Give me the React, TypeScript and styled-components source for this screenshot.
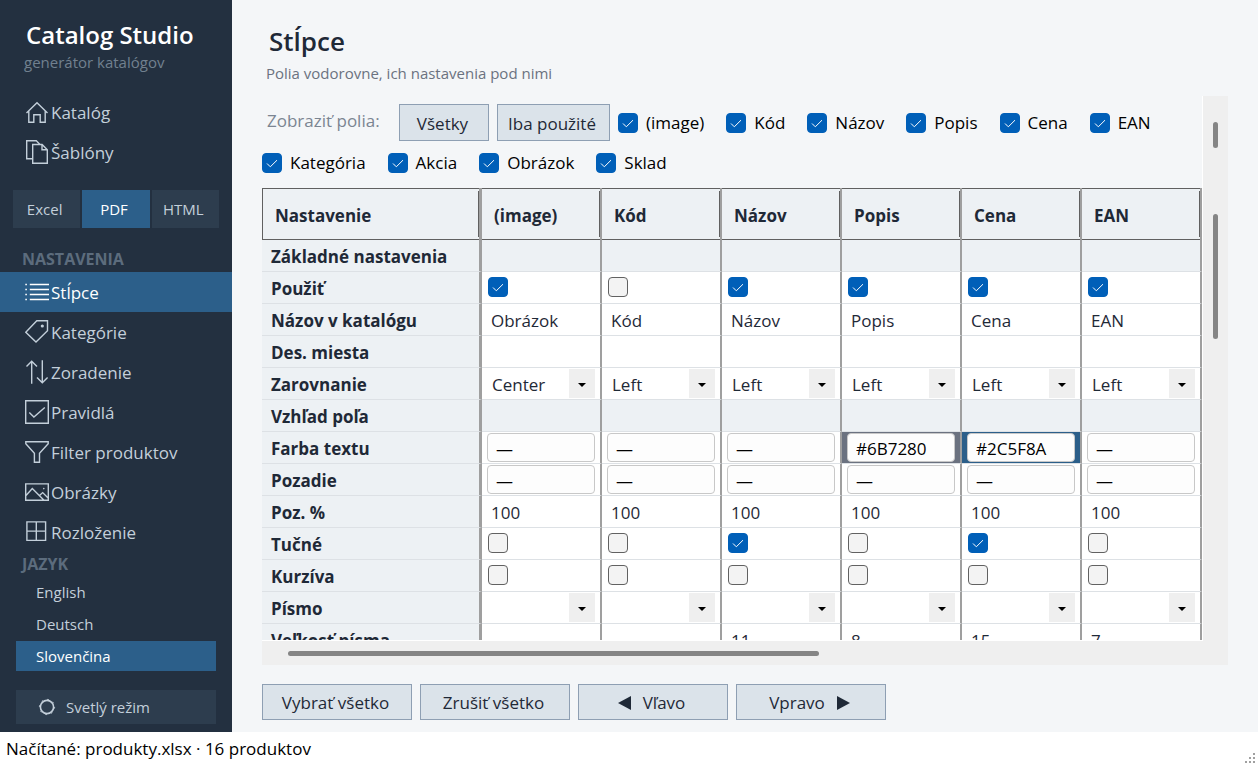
import React, { useState } from 'react';
import styled, { createGlobalStyle } from 'styled-components';

const GlobalStyle = createGlobalStyle`
  *, *::before, *::after { box-sizing: border-box; }
  html, body, #root { height: 100%; }
  body {
    margin: 0;
    background: #ffffff;
    color: #1f2937;
    font-family: 'Open Sans', 'Noto Sans', 'Liberation Sans', sans-serif;
    font-size: 17px;
    line-height: 24px;
  }
  button, input, select { font: inherit; color: inherit; margin: 0; }
  h1, h2, p { margin: 0; }
`;

const Window = styled.div`
  display: flex;
  flex-direction: column;
  height: 100vh;
  min-height: 764px;
`;

const Body = styled.div`
  display: flex;
  flex: 1;
  min-height: 0;
`;

const StatusBar = styled.footer`
  display: flex;
  align-items: center;
  justify-content: space-between;
  height: 32px;
  padding: 2px 0 0 6px;
  background: #ffffff;
  color: #000000;
`;

const Grip = styled.svg`
  align-self: flex-end;
  display: block;
`;

/* Sidebar */

const Sidebar = styled.aside`
  display: flex;
  flex-direction: column;
  flex: 0 0 232px;
  background: #233040;
  color: #c3cfda;
`;

const Brand = styled.div`
  padding: 20px 24px 0;
  height: 92px;
`;

const BrandName = styled.p`
  padding-left: 2px;
  font-size: 24px;
  line-height: 30px;
  font-weight: 600;
  color: #ffffff;
`;

const BrandNote = styled.p`
  font-size: 15px;
  line-height: 24px;
  color: #71808f;
`;

const NavLink = styled.a<{ $active?: boolean }>`
  display: flex;
  align-items: center;
  gap: 2px;
  height: 40px;
  padding-left: 25px;
  text-decoration: none;
  color: ${(p) => (p.$active ? '#ffffff' : '#c3cfda')};
  background: ${(p) => (p.$active ? '#2c5f8a' : 'transparent')};
`;

const NavText = styled.span`
  padding-top: 2px;
`;

const NavIcon = styled.svg`
  flex: none;
  width: 24px;
  height: 24px;
  fill: none;
  stroke: currentColor;
  stroke-width: 1.4;
`;

const Segments = styled.div`
  display: flex;
  gap: 2px;
  margin: 18px 13px 0;
`;

const Segment = styled.button<{ $active?: boolean }>`
  flex: 1;
  height: 38px;
  padding: 0 4px 0 0;
  border: 0;
  font-size: 15px;
  color: ${(p) => (p.$active ? '#ffffff' : '#c3cfda')};
  background: ${(p) => (p.$active ? '#2c5f8a' : '#2d3d4e')};
`;

const GroupTitle = styled.h2<{ $gap: number }>`
  padding: ${(p) => p.$gap}px 0 2px 22px;
  font-size: 16px;
  line-height: 22px;
  font-weight: 700;
  color: #5c6c7d;
`;

const Languages = styled.div`
  display: flex;
  flex-direction: column;
  gap: 2px;
  padding: 0 16px;
`;

const Language = styled.button<{ $active?: boolean }>`
  height: 30px;
  padding: 0 20px;
  border: 0;
  text-align: left;
  font-size: 15px;
  color: ${(p) => (p.$active ? '#ffffff' : '#c3cfda')};
  background: ${(p) => (p.$active ? '#2c5f8a' : 'transparent')};
`;

const ThemeButton = styled.button`
  display: flex;
  align-items: center;
  gap: 10px;
  height: 34px;
  margin: auto 16px 8px;
  padding: 0 22px;
  border: 0;
  font-size: 15px;
  color: #c3cfda;
  background: #2d3d4e;
`;

/* Main area */

const Main = styled.main`
  display: flex;
  flex-direction: column;
  flex: 1;
  min-width: 0;
  padding: 23px 30px 12px;
  background: #f4f6f8;
`;

const Title = styled.h1`
  padding-left: 7px;
  font-size: 26px;
  line-height: 36px;
  font-weight: 600;
`;

const Subtitle = styled.p`
  height: 37px;
  padding: 2px 4px 0;
  font-size: 15px;
  line-height: 24px;
  color: #6b7280;
`;

const Pane = styled.section<{ $grow?: boolean }>`
  display: flex;
  flex: ${(p) => (p.$grow ? '1 1 0' : '0 0 92px')};
  min-height: 0;
`;

const VerticalBar = styled.div<{ $top: number; $thumb: number }>`
  flex: 0 0 25px;
  padding: ${(p) => p.$top}px 0 0 10px;
  background: #efefef;

  &::before {
    content: '';
    display: block;
    width: 5px;
    height: ${(p) => p.$thumb}px;
    border-radius: 3px;
    background: #858585;
  }
`;

const HorizontalBar = styled.div`
  height: 25px;
  padding: 10px 0 0 26px;
  border-top: 1px solid #ffffff;
  background: #efefef;

  &::before {
    content: '';
    display: block;
    width: 58%;
    height: 5px;
    border-radius: 3px;
    background: #858585;
  }
`;

const Filters = styled.div`
  display: flex;
  flex: 1;
  flex-wrap: wrap;
  align-content: flex-start;
  align-items: center;
  gap: 12px 8px;
  min-width: 0;
  padding-top: 8px;
  border-right: 1px solid #ffffff;
`;

const FiltersLabel = styled.span`
  width: 129px;
  padding: 0 0 3px 5px;
  color: #7b8592;
`;

const Button = styled.button<{ $width: number; $height: number }>`
  display: flex;
  align-items: center;
  justify-content: center;
  gap: 12px;
  width: ${(p) => p.$width}px;
  height: ${(p) => p.$height}px;
  padding: 2px 3px 0 0;
  border: 1px solid #8e9fb3;
  background: #dbe3ea;
  color: #1f2937;
  white-space: nowrap;
`;

const FieldToggle = styled.label`
  display: flex;
  align-items: center;
  gap: 8px;
  height: 20px;
  padding-right: 14px;
  color: #000000;
`;

const CheckFrame = styled.span`
  display: inline-grid;
  vertical-align: top;

  & > * { grid-area: 1 / 1; }
`;

const CheckInput = styled.input`
  appearance: none;
  width: 20px;
  height: 20px;
  border: 1px solid #616161;
  border-radius: 4px;
  background: #f3f3f3;

  &:checked {
    border-color: #005fb8;
    background: #005fb8;
  }
`;

const CheckMark = styled.svg`
  width: 20px;
  height: 20px;
  fill: none;
  stroke: #ffffff;
  stroke-width: 1;
  pointer-events: none;
  visibility: hidden;

  ${CheckInput}:checked + & { visibility: visible; }
`;

const TableArea = styled.div`
  display: flex;
  flex-direction: column;
  flex: 1;
  min-width: 0;
`;

const TableView = styled.div`
  flex: 1 1 0;
  min-height: 0;
  overflow: hidden;
  border-right: 1px solid #ffffff;
`;

const Table = styled.table`
  width: 100%;
  table-layout: fixed;
  border-collapse: separate;
  border-spacing: 0;
`;

const HeadCell = styled.th<{ $first?: boolean }>`
  width: ${(p) => (p.$first ? '220px' : 'auto')};
  height: 52px;
  padding: 3px 0;
  text-align: left;
  font-weight: 700;
  background: #edf1f4;
  border: 0 solid #9f9f9f;
  border-right-width: ${(p) => (p.$first ? 3 : 2)}px;
  box-shadow: inset 0 1px #606060, inset 0 -1px #606060${(p) => (p.$first ? ', inset 1px 0 #606060' : '')};
`;

const HeadText = styled.span<{ $first?: boolean }>`
  display: block;
  padding: 13px 0 9px ${(p) => (p.$first ? 13 : 12)}px;
  border-right: 1px solid #606060;
`;

const RowHead = styled.th`
  height: 32px;
  padding: 2px 0 0 9px;
  text-align: left;
  font-weight: 700;
  line-height: 24px;
  white-space: nowrap;
  background: #edf1f4;
  border-right: 3px solid #9f9f9f;
  border-bottom: 1px solid #dde1e5;
`;

const Cell = styled.td<{ $fill?: string; $inset?: string }>`
  height: 32px;
  padding: ${(p) => p.$inset ?? '0'};
  vertical-align: top;
  line-height: 0;
  background: ${(p) => p.$fill ?? '#ffffff'};
  border-right: 2px solid #9f9f9f;
  border-bottom: 1px solid #dde1e5;
`;

const TextInput = styled.input`
  display: block;
  width: 100%;
  height: 31px;
  padding: 2px 9px 0;
  border: 0;
  line-height: 24px;
  background: transparent;
`;

const ColorInput = styled.input`
  display: block;
  width: 100%;
  height: 29px;
  padding: 2px 8px 0;
  border: 1px solid #c8c8c8;
  border-radius: 4px;
  line-height: 24px;
  color: #000000;
  background: #fdfdfd;
`;

const SelectFrame = styled.span`
  display: grid;
  grid-template-columns: 1fr 26px;
  height: 29px;
`;

const Select = styled.select`
  appearance: none;
  grid-area: 1 / 1 / 2 / 3;
  min-width: 0;
  padding: 2px 0 0 9px;
  border: 0;
  line-height: 24px;
  background: transparent;
`;

const SelectArrow = styled.svg`
  grid-area: 1 / 2;
  width: 26px;
  height: 29px;
  background: #efefef;
  pointer-events: none;
`;

const Actions = styled.div`
  display: flex;
  gap: 8px;
  margin-top: 19px;
`;

const icons: Record<string, React.ReactNode> = {
  home: <path d="M1.5 13 12 2.8 22.5 13M3.8 11v11.3h5v-7.6h6.4v7.6h5V11" />,
  copy: (
    <>
      <path d="M7.5 18.8H1.7V.8h9.6l3.4 3.4" />
      <path d="M7.7 4.5h9.4l5.2 5.2v13.5H7.7zM17 4.5v5.3h5.3" />
    </>
  ),
  list: <path d="M4.8 4.5H24M4.8 9.5H24M4.8 14.5H24M4.8 19.5H24M.3 4.5h1.6M.3 9.5h1.6M.3 14.5h1.6M.3 19.5h1.6" />,
  tag: (
    <>
      <path d="M.8 12.2 11.8.8h10.7v10L11 22z" />
      <circle cx="17.3" cy="6" r=".9" fill="currentColor" />
    </>
  ),
  sort: <path d="M6.7 23.8V1M1.5 6.5 6.7 1.2 12 6.5M17.3.3v22.5M12 17.5l5.3 5.3 5.3-5.3" />,
  check: <path d="M.7.7h22.6v22.6H.7zM4.3 12.5l4.6 4.6L19.8 7.4" />,
  filter: <path d="M.8 1.7h22.4v2l-8.7 9.6v8.9H9.4v-8.9L.8 3.7z" />,
  image: (
    <>
      <path d="M.7 3.9h22.6v16.4H.7zM1 15.5l6.3-7L19 20.2M14.5 15.6l3.2-3 5.6 5.6" />
      <circle cx="18.8" cy="8.6" r=".8" fill="currentColor" stroke="none" />
    </>
  ),
  grid: <path d="M1.9 1.9h18.7v18.5H1.9zM11.3 2v18.4M2 11.1h18.6" />,
};

const topNav = [
  { icon: 'home', label: 'Katalóg' },
  { icon: 'copy', label: 'Šablóny' },
];

const settingsNav = [
  { icon: 'list', label: 'Stĺpce' },
  { icon: 'tag', label: 'Kategórie' },
  { icon: 'sort', label: 'Zoradenie' },
  { icon: 'check', label: 'Pravidlá' },
  { icon: 'filter', label: 'Filter produktov' },
  { icon: 'image', label: 'Obrázky' },
  { icon: 'grid', label: 'Rozloženie' },
];

const toggles = ['(image)', 'Kód', 'Názov', 'Popis', 'Cena', 'EAN', 'Kategória', 'Akcia', 'Obrázok', 'Sklad'];
const columns = ['(image)', 'Kód', 'Názov', 'Popis', 'Cena', 'EAN'];

type Row =
  | { kind: 'section'; label: string }
  | { kind: 'check'; label: string; values: boolean[] }
  | { kind: 'text' | 'select' | 'color'; label: string; values: string[] };

const blank = ['', '', '', '', '', ''];

const rows: Row[] = [
  { kind: 'section', label: 'Základné nastavenia' },
  { kind: 'check', label: 'Použiť', values: [true, false, true, true, true, true] },
  { kind: 'text', label: 'Názov v katalógu', values: ['Obrázok', 'Kód', 'Názov', 'Popis', 'Cena', 'EAN'] },
  { kind: 'text', label: 'Des. miesta', values: blank },
  { kind: 'select', label: 'Zarovnanie', values: ['Center', 'Left', 'Left', 'Left', 'Left', 'Left'] },
  { kind: 'section', label: 'Vzhľad poľa' },
  { kind: 'color', label: 'Farba textu', values: ['—', '—', '—', '#6B7280', '#2C5F8A', '—'] },
  { kind: 'color', label: 'Pozadie', values: ['—', '—', '—', '—', '—', '—'] },
  { kind: 'text', label: 'Poz. %', values: ['100', '100', '100', '100', '100', '100'] },
  { kind: 'check', label: 'Tučné', values: [false, false, true, false, true, false] },
  { kind: 'check', label: 'Kurzíva', values: [false, false, false, false, false, false] },
  { kind: 'select', label: 'Písmo', values: blank },
  { kind: 'text', label: 'Veľkosť písma', values: ['', '', '11', '8', '15', '7'] },
];

function Checkbox({ initial, label }: { initial: boolean; label?: string }) {
  const [checked, setChecked] = useState(initial);
  return (
    <CheckFrame>
      <CheckInput type="checkbox" aria-label={label} checked={checked} onChange={() => setChecked(!checked)} />
      <CheckMark viewBox="0 0 20 20" aria-hidden="true">
        <path d="M5 10.5 8.3 13.8 15 7.2" />
      </CheckMark>
    </CheckFrame>
  );
}

function NavItem({ icon, label, active }: { icon: string; label: string; active?: boolean }) {
  return (
    <NavLink href="#" $active={active} aria-current={active ? 'page' : undefined}>
      <NavIcon viewBox="0 0 24 24" aria-hidden="true">{icons[icon]}</NavIcon>
      <NavText>{label}</NavText>
    </NavLink>
  );
}

function ValueCell({ row, index }: { row: Row; index: number }) {
  const name = `${row.label} – ${columns[index]}`;
  switch (row.kind) {
    case 'section':
      return <Cell $fill="#edf1f4" />;
    case 'check':
      return (
        <Cell $inset="5px 6px 0">
          <Checkbox initial={row.values[index]} label={name} />
        </Cell>
      );
    case 'text':
      return (
        <Cell>
          <TextInput aria-label={name} defaultValue={row.values[index]} />
        </Cell>
      );
    case 'select':
      return (
        <Cell $inset="1px 5px 0 1px">
          <SelectFrame>
            <Select aria-label={name} defaultValue={row.values[index]}>
              {row.values[index] === '' ? <option value="" /> : null}
              <option>Left</option>
              <option>Center</option>
              <option>Right</option>
            </Select>
            <SelectArrow viewBox="0 0 26 29" aria-hidden="true">
              <path d="M9 14h8l-4 4z" />
            </SelectArrow>
          </SelectFrame>
        </Cell>
      );
    case 'color': {
      const value = row.values[index];
      return (
        <Cell $inset="1px 5px 0" $fill={value.startsWith('#') ? value : undefined}>
          <ColorInput aria-label={name} defaultValue={value} />
        </Cell>
      );
    }
  }
}

export default function App() {
  return (
    <>
      <GlobalStyle />
      <Window>
        <Body>
          <Sidebar>
            <Brand>
              <BrandName>Catalog Studio</BrandName>
              <BrandNote>generátor katalógov</BrandNote>
            </Brand>
            <nav>
              {topNav.map((item) => <NavItem key={item.label} {...item} />)}
            </nav>
            <Segments>
              <Segment type="button">Excel</Segment>
              <Segment type="button" $active>PDF</Segment>
              <Segment type="button">HTML</Segment>
            </Segments>
            <GroupTitle $gap={20}>NASTAVENIA</GroupTitle>
            <nav>
              {settingsNav.map((item, i) => <NavItem key={item.label} {...item} active={i === 0} />)}
            </nav>
            <GroupTitle $gap={1}>JAZYK</GroupTitle>
            <Languages>
              <Language type="button">English</Language>
              <Language type="button">Deutsch</Language>
              <Language type="button" $active>Slovenčina</Language>
            </Languages>
            <ThemeButton type="button">
              <svg width="18" height="18" viewBox="0 0 18 18" fill="none" stroke="currentColor" aria-hidden="true">
                <circle cx="9" cy="9" r="6.6" strokeWidth="1.6" />
                <circle cx="9" cy="9" r="7.6" strokeWidth="1" strokeDasharray="1.6 4.37" />
              </svg>
              Svetlý režim
            </ThemeButton>
          </Sidebar>
          <Main>
            <Title>Stĺpce</Title>
            <Subtitle>Polia vodorovne, ich nastavenia pod nimi</Subtitle>
            <Pane>
              <Filters>
                <FiltersLabel>Zobraziť polia:</FiltersLabel>
                <Button type="button" $width={90} $height={37}>Všetky</Button>
                <Button type="button" $width={113} $height={37}>Iba použité</Button>
                {toggles.map((name) => (
                  <FieldToggle key={name}>
                    <Checkbox initial />
                    {name}
                  </FieldToggle>
                ))}
              </Filters>
              <VerticalBar $top={26} $thumb={26} />
            </Pane>
            <Pane $grow>
              <TableArea>
                <TableView>
                  <Table>
                    <thead>
                      <tr>
                        <HeadCell $first scope="col"><HeadText $first>Nastavenie</HeadText></HeadCell>
                        {columns.map((name) => (
                          <HeadCell key={name} scope="col"><HeadText>{name}</HeadText></HeadCell>
                        ))}
                      </tr>
                    </thead>
                    <tbody>
                      {rows.map((row) => (
                        <tr key={row.label}>
                          <RowHead scope="row">{row.label}</RowHead>
                          {columns.map((name, i) => <ValueCell key={name} row={row} index={i} />)}
                        </tr>
                      ))}
                    </tbody>
                  </Table>
                </TableView>
                <HorizontalBar />
              </TableArea>
              <VerticalBar $top={26} $thumb={125} />
            </Pane>
            <Actions>
              <Button type="button" $width={150} $height={36}>Vybrať všetko</Button>
              <Button type="button" $width={150} $height={36}>Zrušiť všetko</Button>
              <Button type="button" $width={150} $height={36}>
                <svg width="13" height="14" viewBox="0 0 13 14" aria-hidden="true"><path d="M13 0v14L0 7z" fill="currentColor" /></svg>
                Vľavo
              </Button>
              <Button type="button" $width={150} $height={36}>
                Vpravo
                <svg width="13" height="14" viewBox="0 0 13 14" aria-hidden="true"><path d="M0 0v14l13-7z" fill="currentColor" /></svg>
              </Button>
            </Actions>
          </Main>
        </Body>
        <StatusBar>
          <span>Načítané: produkty.xlsx · 16 produktov</span>
          <Grip width="14" height="12" viewBox="0 0 14 12" fill="#a0a0a0" aria-hidden="true">
            <path d="M9 1h2v2H9zM5 5h2v2H5zM9 5h2v2H9zM1 9h2v2H1zM5 9h2v2H5zM9 9h2v2H9z" />
          </Grip>
        </StatusBar>
      </Window>
    </>
  );
}
